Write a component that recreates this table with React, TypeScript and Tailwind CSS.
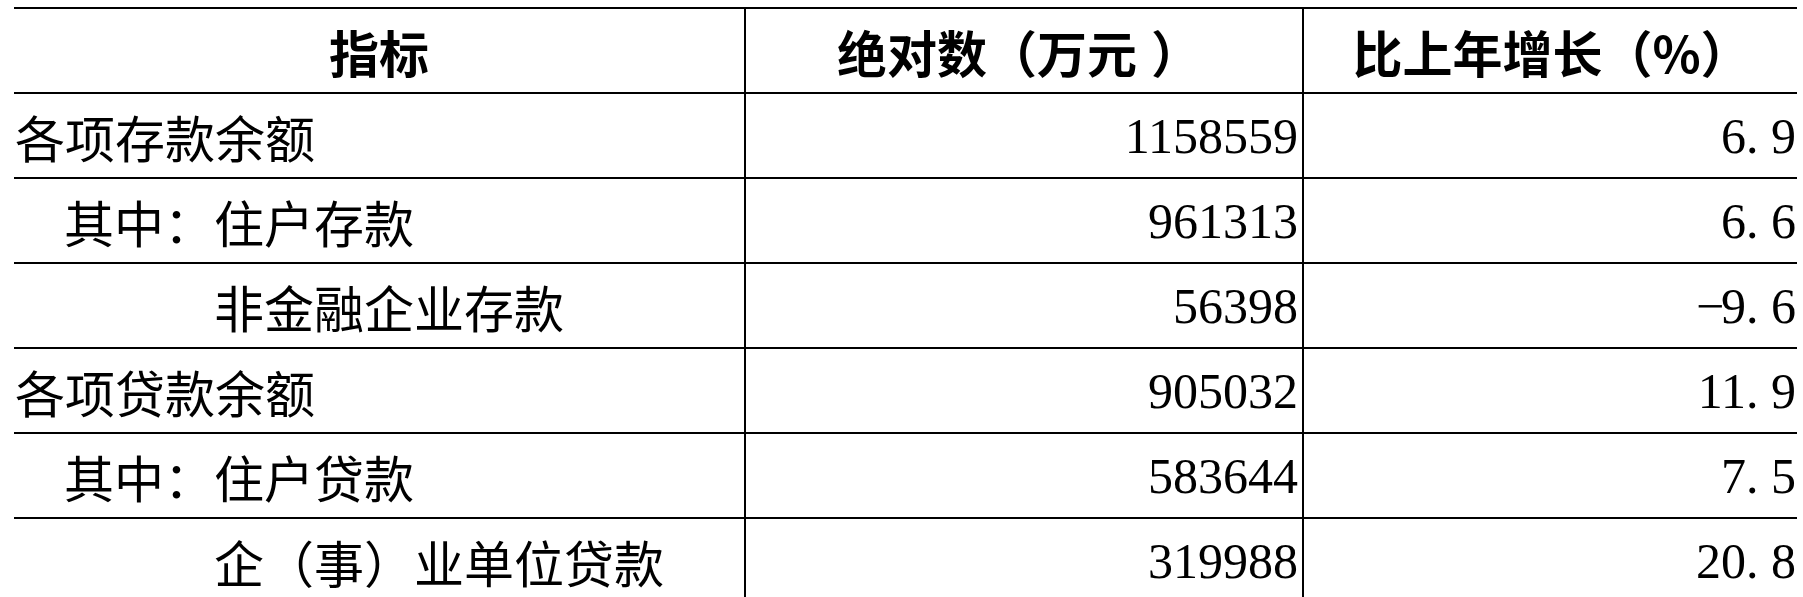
import React from "react";

const cjk = { fontFamily: '"Noto Sans CJK SC", "Noto Sans", sans-serif' };
const num = { fontFamily: '"Liberation Serif", "Times New Roman", serif' };

function Num({ v }: { v: string }) {
  return (
    <span className="whitespace-nowrap">
      {v.split("").map((c, i) => {
        if (c === ".")
          return (
            <span key={i} className="inline-block w-[0.5em] text-left">
              .
            </span>
          );
        if (c === "-")
          return (
            <span key={i} className="inline-block w-[0.5em] text-center">
              −
            </span>
          );
        return <span key={i}>{c}</span>;
      })}
    </span>
  );
}

const rows: { label: string; indent: number; abs: string; pct: string }[] = [
  { label: "各项存款余额", indent: 0, abs: "1158559", pct: "6.9" },
  { label: "其中：住户存款", indent: 1, abs: "961313", pct: "6.6" },
  { label: "非金融企业存款", indent: 4, abs: "56398", pct: "-9.6" },
  { label: "各项贷款余额", indent: 0, abs: "905032", pct: "11.9" },
  { label: "其中：住户贷款", indent: 1, abs: "583644", pct: "7.5" },
  { label: "企（事）业单位贷款", indent: 4, abs: "319988", pct: "20.8" },
];

const indentClass = ["pl-0", "pl-[50px]", "", "", "pl-[200px]"];

export default function App() {
  return (
    <div className="w-[1803px] h-[597px] overflow-hidden bg-white text-black">
      <div className="ml-[14px] mt-[7px] w-[1783px]">
        <div className="grid grid-cols-[730px_558px_495px] h-[85px] border-t-2 border-black">
          <div className="flex items-center justify-center text-[50px] font-bold leading-none" style={cjk}>
            指标
          </div>
          <div className="flex items-center justify-center border-l-2 border-black text-[50px] font-bold leading-none pr-[10px]" style={cjk}>
            <span>绝对数（万元</span>
            <span className="inline-block w-[14px]"></span>
            <span>）</span>
          </div>
          <div className="flex items-center justify-center border-l-2 border-black text-[50px] font-bold leading-none pl-[2px]" style={cjk}>
            比上年增长（%）
          </div>
        </div>
        {rows.map((r, i) => (
          <div key={i} className="grid grid-cols-[730px_558px_495px] h-[85px] border-t-2 border-black">
            <div
              className={`flex items-center text-[50px] leading-none pl-[1px] whitespace-nowrap ${indentClass[r.indent]}`}
              style={cjk}
            >
              {r.label}
            </div>
            <div className="flex items-center justify-end border-l-2 border-black text-[50px] leading-none pr-[4px]" style={num}>
              <Num v={r.abs} />
            </div>
            <div className="flex items-center justify-end border-l-2 border-black text-[50px] leading-none pr-[1px]" style={num}>
              <Num v={r.pct} />
            </div>
          </div>
        ))}
      </div>
    </div>
  );
}
